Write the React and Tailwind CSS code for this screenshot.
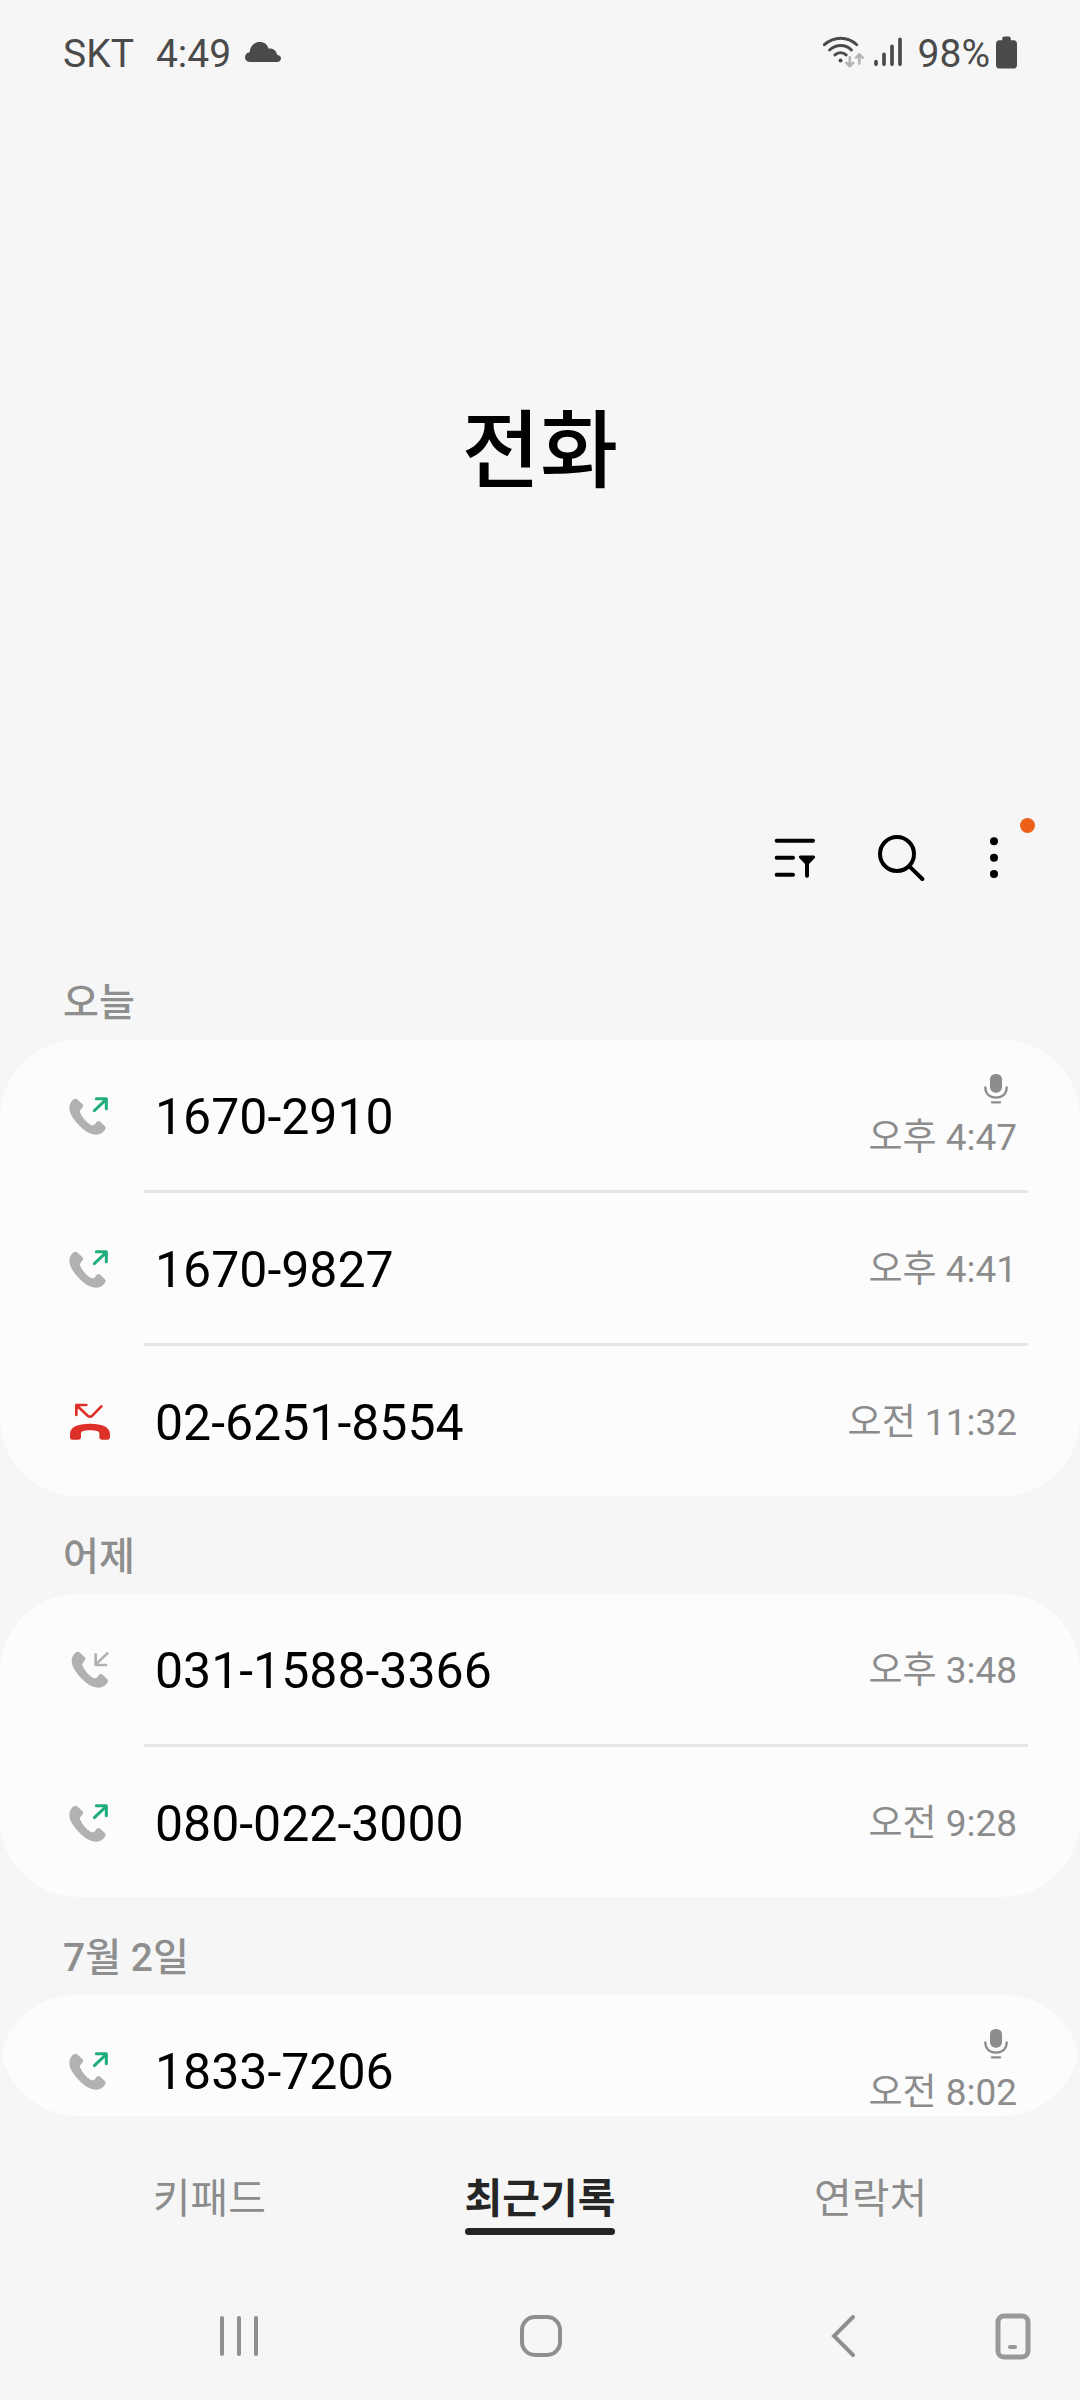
import { useState } from 'react'

const GROUPS = [
  {
    title: '오늘',
    calls: [
      { number: '1670-2910', time: '오후 4:47', type: 'outgoing', recorded: true },
      { number: '1670-9827', time: '오후 4:41', type: 'outgoing' },
      { number: '02-6251-8554', time: '오전 11:32', type: 'missed' },
    ],
  },
  {
    title: '어제',
    calls: [
      { number: '031-1588-3366', time: '오후 3:48', type: 'incoming' },
      { number: '080-022-3000', time: '오전 9:28', type: 'outgoing' },
    ],
  },
  {
    title: '7월 2일',
    calls: [{ number: '1833-7206', time: '오전 8:02', type: 'outgoing', recorded: true }],
  },
]

const TABS = ['키패드', '최근기록', '연락처']

const HANDSET =
  'M20 19C24 16 29 17 32 20L46 33C49 36 49 39 47 42L41 50C38 53 38 57 40 60C46 74 58 88 72 96C76 97 79 97 82 95L89 87C92 84 96 83 100 86L113 99C116 102 117 106 114 110C107 120 98 125 86 125C66 124 50 112 36 97C20 79 7 62 7 44C7 34 12 25 20 19Z'

export default function App() {
  const [tab, setTab] = useState('최근기록')

  return (
    <div className="flex h-screen flex-col overflow-hidden bg-[#f6f6f6] font-[Roboto,'Noto_Sans_CJK_KR',sans-serif] text-black">
      <StatusBar />

      <header className="flex h-[692px] shrink-0 items-center justify-center pt-1">
        <h1 className="text-[85px] leading-none font-medium">전화</h1>
      </header>

      <Toolbar />

      <main className="min-h-0 flex-1 overflow-hidden rounded-b-[78px]">
        {GROUPS.map((group) => (
          <CallGroup key={group.title} {...group} />
        ))}
      </main>

      <nav className="grid h-[156px] shrink-0 grid-cols-3 px-11">
        {TABS.map((name) => (
          <button
            key={name}
            type="button"
            onClick={() => setTab(name)}
            className="flex flex-col items-center pt-[54px]"
          >
            <span
              className={
                tab === name
                  ? 'text-[41px] leading-[58px] font-bold text-[#252525]'
                  : 'text-[41px] leading-[58px] text-[#8c8c8c]'
              }
            >
              {name}
              {tab === name && <span className="block h-[7px] rounded-full bg-[#252525]" />}
            </span>
          </button>
        ))}
      </nav>

      <SystemNav />
    </div>
  )
}

function StatusBar() {
  return (
    <div className="flex h-[104px] shrink-0 items-center justify-between px-[63px] text-[39px] leading-none text-[#4a4a4a]">
      <div className="flex items-center">
        <span className="pt-1">SKT</span>
        <span className="ml-[22px] pt-1">4:49</span>
        <svg viewBox="0 0 108 60" className="ml-[14px] h-5 w-9" fill="currentColor" aria-hidden="true">
          <path d="M14 60C5 60 0 54 0 46C0 38 6 32 14 31C15 13 27 0 44 0C58 0 67 8 71 20C84 18 94 26 96 38C103 39 108 43 108 49C108 56 103 60 96 60Z" />
        </svg>
      </div>
      <div className="flex items-center">
        <svg viewBox="0 0 124 96" className="h-8 w-[41px]" fill="none" strokeLinecap="round" aria-hidden="true">
          <g stroke="#4a4a4a" strokeWidth="9">
            <path d="M4 26C34 0 74 0 102 26" />
            <path d="M20 42C40 24 68 24 86 42" />
            <path d="M36 57C46 48 60 48 70 57" />
          </g>
          <circle cx="53" cy="74" r="6" fill="#4a4a4a" />
          <g stroke="#b4b4b4" strokeWidth="8" strokeLinejoin="round">
            <path d="M81 64V90M71 81L81 91L91 81" />
            <path d="M110 83V57M100 65L110 55L120 65" />
          </g>
        </svg>
        <svg viewBox="0 0 84 90" className="ml-[10px] h-[30px] w-7" stroke="currentColor" strokeWidth="11" strokeLinecap="round" aria-hidden="true">
          <path d="M6 74V82M30 52V82M54 28V82M78 7V82" />
        </svg>
        <span className="ml-4 pt-1">98%</span>
        <svg viewBox="0 0 64 98" className="ml-[6px] h-[33px] w-[21px]" fill="currentColor" aria-hidden="true">
          <path d="M19 12V6Q19 0 25 0H39Q45 0 45 6V12H54Q64 12 64 24V86Q64 98 52 98H12Q0 98 0 86V24Q0 12 10 12Z" />
        </svg>
      </div>
    </div>
  )
}

function Toolbar() {
  return (
    <div className="flex h-[124px] shrink-0 items-center justify-end pr-[53px]">
      <button type="button" aria-label="필터" className="p-2">
        <svg viewBox="0 0 144 144" className="size-12" fill="none" stroke="#000" strokeWidth="12" strokeLinecap="round">
          <path d="M17 20H126M17 71H66M17 122H66" />
          <path d="M108 80V125" />
          <path d="M88 69H128L110 88H106Z" fill="#000" strokeWidth="9" strokeLinejoin="round" />
        </svg>
      </button>
      <button type="button" aria-label="검색" className="ml-[42px] p-2">
        <svg viewBox="0 0 144 144" className="size-12" fill="none" stroke="#000" strokeWidth="12" strokeLinecap="round">
          <circle cx="60" cy="60" r="51" />
          <path d="M98 98L136 135" />
        </svg>
      </button>
      <button type="button" aria-label="더보기" className="relative ml-[30px] p-2">
        <svg viewBox="0 0 144 144" className="size-12">
          <circle cx="69" cy="22" r="12" />
          <circle cx="69" cy="71" r="12" />
          <circle cx="69" cy="120" r="12" />
        </svg>
        <span className="absolute -top-2 -right-2 size-[15px] rounded-full bg-[#ee6019]" />
      </button>
    </div>
  )
}

function CallGroup({ title, calls }) {
  return (
    <section className="first:pt-[22px]">
      <h2 className="flex h-[98px] items-center pt-6 pl-[63px] text-[39px] leading-none font-medium text-[#8e8e8e]">
        {title}
      </h2>
      <ul className="overflow-hidden rounded-[78px] bg-[#fcfcfc]">
        {calls.map((call, i) => (
          <li key={call.number}>
            {i > 0 && <div className="mr-[52px] ml-36 h-[3px] bg-[#e5e5e5]" />}
            <CallRow {...call} />
          </li>
        ))}
      </ul>
    </section>
  )
}

function CallRow({ number, time, type, recorded }) {
  return (
    <button type="button" className="flex h-[150px] w-full items-center pr-[63px] pl-[67px] text-left">
      <CallIcon type={type} />
      <span className="ml-11 flex-1 pt-1 text-[50px] leading-none">{number}</span>
      <span className="flex flex-col items-end gap-3 pt-1 text-[37px] leading-[44px] text-[#8c8c8c]">
        {recorded && <MicIcon />}
        {time}
      </span>
    </button>
  )
}

function CallIcon({ type }) {
  if (type === 'missed') {
    return (
      <svg viewBox="0 0 132 132" className="size-11 shrink-0" role="img" aria-label="부재중">
        <path
          d="M9 114V104C10 84 30 74 69 74C108 74 128 84 129 104V114C129 119 126 122 121 122H105C100 122 97 119 97 115V103C97 98 88 94 69 94C50 94 42 98 42 103V115C42 119 39 122 33 122H16C11 122 9 119 9 114Z"
          fill="#dd3028"
        />
        <path
          d="M28 48V18H58M28 18L62 50Q69 56 76 50L103 22"
          fill="none"
          stroke="#dd3028"
          strokeWidth="8"
          strokeLinecap="round"
          strokeLinejoin="round"
        />
      </svg>
    )
  }

  if (type === 'incoming') {
    return (
      <svg viewBox="0 0 132 132" className="size-11 shrink-0" role="img" aria-label="수신">
        <path d={HANDSET} fill="#b0b1b3" transform="translate(7 -3)" />
        <path
          d="M121 19L86 53M86 22V54H117"
          fill="none"
          stroke="#b0b1b3"
          strokeWidth="8"
          strokeLinecap="round"
          strokeLinejoin="round"
        />
      </svg>
    )
  }

  return (
    <svg viewBox="0 0 132 132" className="size-11 shrink-0" role="img" aria-label="발신">
      <path d={HANDSET} fill="#b0b1b3" />
      <path
        d="M82 53L117 20M88 17H118V47"
        fill="none"
        stroke="#1fae79"
        strokeWidth="9"
        strokeLinecap="round"
        strokeLinejoin="round"
      />
    </svg>
  )
}

function MicIcon() {
  return (
    <svg viewBox="0 0 72 90" className="mr-[9px] h-[30px] w-6" role="img" aria-label="녹음됨">
      <rect x="18" y="0" width="36" height="56" rx="16" fill="#8c8c8c" />
      <path
        d="M4 40C4 60 17 71 36 71C55 71 68 60 68 40M24 85H48"
        fill="none"
        stroke="#8c8c8c"
        strokeWidth="7"
        strokeLinecap="round"
      />
    </svg>
  )
}

function SystemNav() {
  return (
    <div className="flex h-32 shrink-0 items-center pr-12">
      <div className="grid flex-1 grid-cols-3 justify-items-center pl-[88px]">
        <button type="button" aria-label="최근 앱">
          <svg viewBox="0 0 44 44" className="size-11" stroke="#8f8f8f" strokeWidth="4" strokeLinecap="round">
            <path d="M5 4V40M22 4V40M39 4V40" />
          </svg>
        </button>
        <button type="button" aria-label="홈">
          <svg viewBox="0 0 44 44" className="size-11" fill="none" stroke="#8f8f8f" strokeWidth="4">
            <rect x="3" y="3" width="38" height="38" rx="13" />
          </svg>
        </button>
        <button type="button" aria-label="뒤로">
          <svg viewBox="0 0 44 44" className="size-11" fill="none" stroke="#8f8f8f" strokeWidth="4" strokeLinecap="round">
            <path d="M32 3L13 22L32 41" />
          </svg>
        </button>
      </div>
      <button type="button" aria-label="화면">
        <svg viewBox="8 0 38 48" className="h-12 w-[38px]" fill="none" stroke="#999" strokeWidth="5" strokeLinecap="round">
          <rect x="12" y="4" width="30" height="41" rx="6" />
          <path d="M24 35H29" strokeWidth="4" />
        </svg>
      </button>
    </div>
  )
}
